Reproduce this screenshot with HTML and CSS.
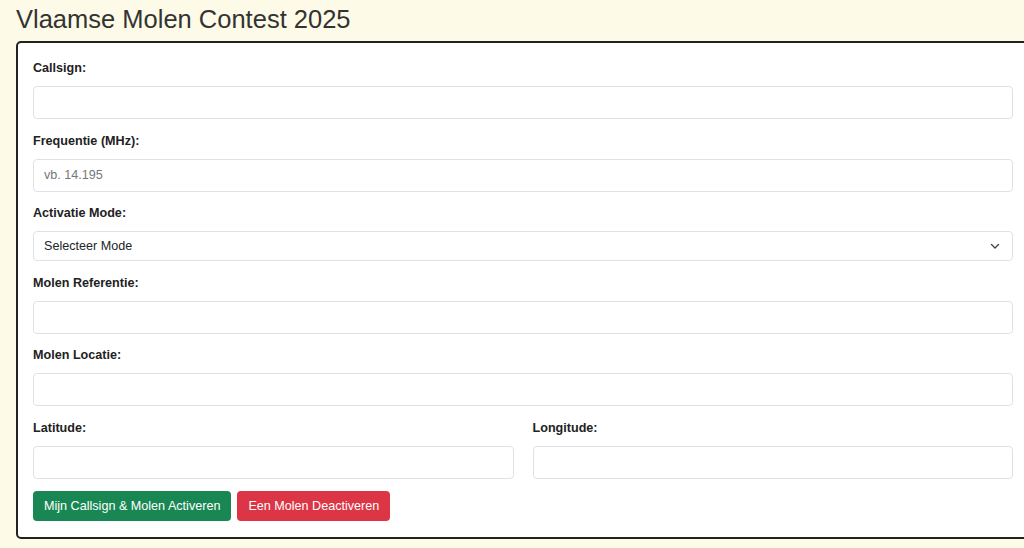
FILE: index.html
```
<!DOCTYPE html>
<html lang="nl">
<head>
    <meta charset="UTF-8">
    <meta name="viewport" content="width=device-width, initial-scale=1.0">
    <title>Vlaamse Molen Contest 2025</title>
    <link rel="stylesheet" href="styles.css">
</head>
<body>
    <h1 class="page-title">Vlaamse Molen Contest 2025</h1>

    <form class="form-card">
        <div class="field">
            <label for="callsign">Callsign:</label>
            <input type="text" id="callsign">
        </div>
        <div class="field">
            <label for="freq">Frequentie (MHz):</label>
            <input type="text" id="freq" placeholder="vb. 14.195">
        </div>
        <div class="field">
            <label for="mode">Activatie Mode:</label>
            <div class="select-wrap">
                <select id="mode">
                    <option>Selecteer Mode</option>
                    <option>SSB</option>
                    <option>CW</option>
                    <option>FT8</option>
                </select>
                <svg class="chevron" width="10" height="7" viewBox="0 0 10 7">
                    <path d="M1.5 1.5l3.5 3.5 3.5-3.5" fill="none" stroke="#444" stroke-width="1.4" stroke-linecap="round" stroke-linejoin="round"/>
                </svg>
            </div>
        </div>
        <div class="field">
            <label for="ref">Molen Referentie:</label>
            <input type="text" id="ref">
        </div>
        <div class="field">
            <label for="loc">Molen Locatie:</label>
            <input type="text" id="loc">
        </div>
        <div class="row">
            <div class="field">
                <label for="lat">Latitude:</label>
                <input type="text" id="lat">
            </div>
            <div class="field">
                <label for="lon">Longitude:</label>
                <input type="text" id="lon">
            </div>
        </div>
        <div class="actions">
            <button type="button" class="btn btn-green">Mijn Callsign &amp; Molen Activeren</button>
            <button type="button" class="btn btn-red">Een Molen Deactiveren</button>
        </div>
    </form>
</body>
</html>
```

FILE: styles.css
```
html, body {
    overflow-x: hidden;
}

body {
    font-family: "Liberation Sans", Arial, sans-serif;
    margin: 0;
    padding: 0 16px;
    background-color: #fdfbe7;
    color: #212529;
}

.page-title {
    font-size: 25.5px;
    font-weight: normal;
    color: #333;
    margin: 0;
    padding-top: 5px;
    line-height: 29px;
    height: 36px;
}

.form-card {
    width: 1014px;
    box-sizing: border-box;
    background-color: #fff;
    border: 2px solid #222;
    border-radius: 5px;
    padding: 18px 15px 16px;
}

.field {
    display: flex;
    flex-direction: column;
    margin-bottom: 14.5px;
}

.field label {
    font-size: 12.6px;
    font-weight: bold;
    line-height: 15px;
    margin-bottom: 10px;
    color: #222;
}

.field input,
.field select {
    box-sizing: border-box;
    width: 100%;
    height: 33px;
    border: 1px solid #dee2e6;
    border-radius: 4px;
    padding: 0 10px;
    font-family: inherit;
    font-size: 12.6px;
    color: #212529;
    background-color: #fff;
}

.field input::placeholder {
    color: #777;
}

.select-wrap {
    position: relative;
}

.field select {
    height: 30px;
    appearance: none;
    -webkit-appearance: none;
}

.chevron {
    position: absolute;
    right: 13px;
    top: 12px;
    pointer-events: none;
}

.row {
    display: grid;
    grid-template-columns: 1fr 1fr;
    gap: 19px;
}

.actions {
    display: flex;
    gap: 6px;
    margin-top: -2px;
}

.btn {
    height: 30px;
    border: none;
    border-radius: 4px;
    padding: 0 11px;
    font-family: inherit;
    font-size: 12.6px;
    color: #fff;
    cursor: pointer;
}

.btn-green {
    background-color: #198754;
}

.btn-red {
    background-color: #dc3545;
}
```
